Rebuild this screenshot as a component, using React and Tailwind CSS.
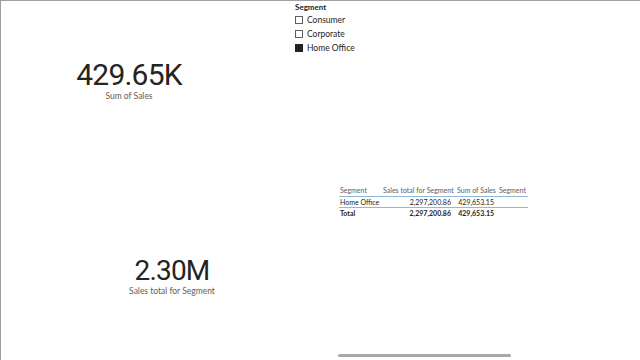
import React from 'react'

const ui = { fontFamily: 'Lato, "Liberation Sans", sans-serif' }
const big = { fontFamily: 'Roboto, "DejaVu Sans", sans-serif' }

function Card({ value, label, className, size }){
  return (
    <div className={'absolute flex flex-col items-center ' + className}>
      <div style={big} className={size + ' font-normal text-[#252423] tracking-[-0.8px]'}>{value}</div>
      <div style={ui} className="text-[8.5px] leading-[10px] text-[#605e5c]">{label}</div>
    </div>
  )
}

function Check({ label, on }){
  return (
    <div className="flex items-center gap-[4px] h-[14px]">
      <span className={'w-[8px] h-[8px] border ' + (on ? 'bg-[#252423] border-[#252423]' : 'border-[#605e5c] bg-white')} />
      <span className="text-[8.5px] text-[#252423] leading-none">{label}</span>
    </div>
  )
}

export default function App(){
  return (
    <div style={ui} className="relative w-[640px] h-[360px] bg-white border-t border-l border-[#a0a0a0] overflow-hidden">
      <div className="absolute left-[294px] top-[2px] flex flex-col">
        <div className="text-[8px] font-bold text-[#252423] leading-none mb-[2px]">Segment</div>
        <Check label="Consumer" />
        <Check label="Corporate" />
        <Check label="Home Office" on />
      </div>

      <Card value="429.65K" label="Sum of Sales" size="text-[30px] leading-[33px]" className="left-[28px] w-[200px] top-[57px]" />
      <Card value="2.30M" label="Sales total for Segment" size="text-[28px] leading-[31px]" className="left-[71px] w-[200px] top-[254px]" />

      <div className="absolute left-[338px] top-[183px] w-[190px] text-[7px] text-[#252423] leading-none whitespace-nowrap">
        <div className="flex h-[12px] items-center text-[#605e5c]">
          <span className="w-[43px] pl-[1px]">Segment</span>
          <span className="w-[74px] pl-[1px]">Sales total for Segment</span>
          <span className="w-[43px] pl-[1px]">Sum of Sales</span>
          <span className="w-[30px]">Segment</span>
        </div>
        <div className="w-[189px] border-t border-[#8fb8de]" />
        <div className="flex h-[10px] items-center">
          <span className="w-[43px] pl-[1px]">Home Office</span>
          <span className="w-[69px] text-right">2,297,200.86</span>
          <span className="w-[43px] text-right">429,653.15</span>
        </div>
        <div className="w-[189px] border-t border-[#8fb8de]" />
        <div className="flex h-[10px] items-center font-bold">
          <span className="w-[43px] pl-[1px]">Total</span>
          <span className="w-[69px] text-right">2,297,200.86</span>
          <span className="w-[43px] text-right">429,653.15</span>
        </div>
      </div>

      <div className="absolute left-[337px] top-[353px] w-[173px] h-[3px] rounded-full bg-[#a8a8a8]" />
    </div>
  )
}
